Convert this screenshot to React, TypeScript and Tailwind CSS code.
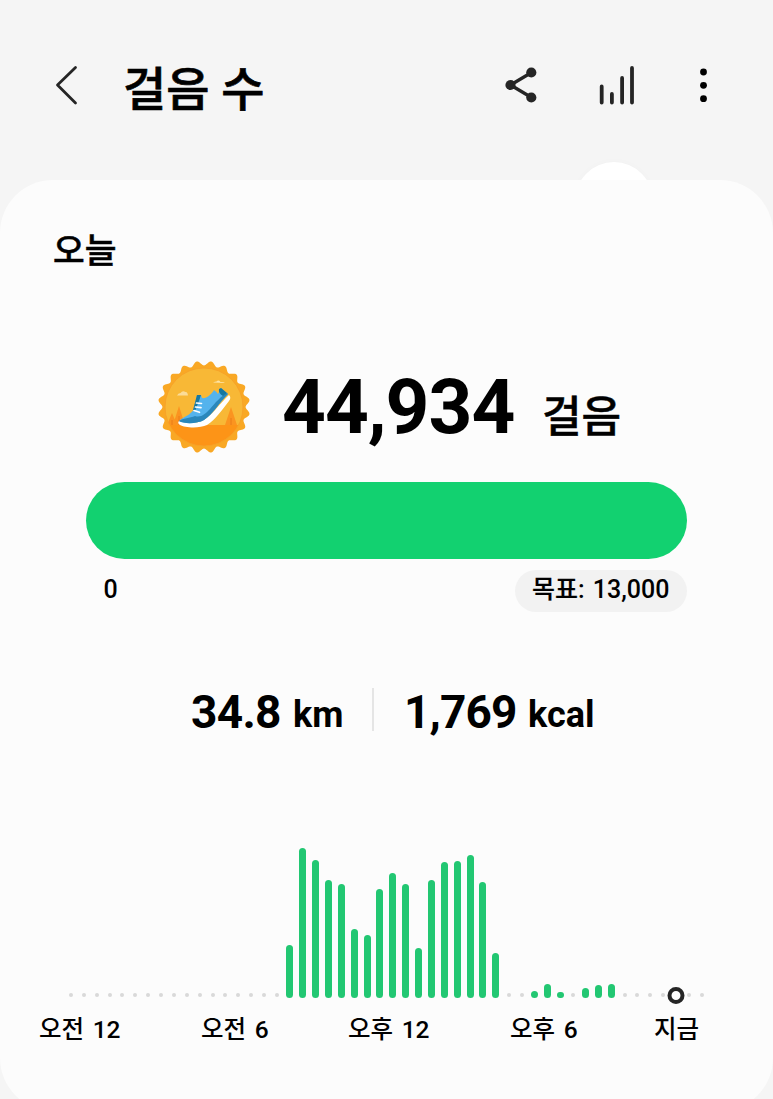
import React from 'react';

// Half-hour slots, bar height in px (0 = no steps recorded)
const SLOTS: number[] = [
  0, 0, 0, 0, 0, 0, 0, 0, 0, 0, 0, 0, 0, 0, 0, 0, 0,
  53.5, 150, 138, 118, 114, 69, 63, 109, 125, 114.5, 50.5, 118, 136.5, 137.5, 143.5, 116.5, 45,
  0, 0, 7.5, 14, 6.5, 0, 10, 13.5, 14,
  0, 0, 0, 0, 0, 0, 0,
];

const NOW_SLOT = 47;

// Scalloped outline of the badge
function scallop(cx: number, cy: number, radius: number, depth: number, count: number) {
  const points: string[] = [];
  for (let i = 0; i < 360; i++) {
    const a = (i / 360) * Math.PI * 2 - Math.PI / 2;
    const r = radius - depth * Math.cos((i / 360) * Math.PI * 2 * count);
    points.push(`${(cx + r * Math.cos(a)).toFixed(2)},${(cy + r * Math.sin(a)).toFixed(2)}`);
  }
  return `M${points.join('L')}Z`;
}

function StepBadge() {
  return (
    <svg className="h-[94px] w-[94px] shrink-0" viewBox="0 0 94 94">
      <defs>
        <clipPath id="badge-face">
          <circle cx="47" cy="47" r="39" />
        </clipPath>
      </defs>
      <path d={scallop(47, 47, 43.8, 2.2, 20)} fill="#f9a825" />
      <g clipPath="url(#badge-face)">
        <rect x="8" y="8" width="78" height="78" fill="#f8b836" />
        <rect x="8" y="65" width="78" height="24" fill="#fd9417" />
        <path d="M22 46l6 19h-12z M15 53l5 12h-10z M74 47l6 18h-12z" fill="#fb9420" />
        <path d="M22 56v9 M15 60v5 M74 58v7" stroke="#e8791a" strokeWidth="0.9" />
      </g>
      <circle cx="47" cy="47" r="39" fill="none" stroke="#f5a02a" strokeWidth="0.8" />
      <path d="M20 35.500q1-2.500 3.500-2.500q2-3 5-1q2-.5 2.500 3.500z" fill="#fbdc98" />
      <path d="M56 22.500q2-1 3.500-1q2-2 4 .5q3-.3 4.500 1z" fill="#fde3a5" />
      <path d="M22 61C27 63 38 64 45 61C55 56 62 44 72 35C74 37 73.500 39 72 41C64 51 59 59 50 65C43 68.500 28 68 23 65Q20 63 22 61Z" fill="#ffffff" />
      <path d="M22 61C26 57 34 55 37 49L40 35L44 35L45 38C49 39 54 35 57 30Q60 32 61 34L64 28L71 34C62 43 56 54 47 60C40 64 27 64 22 61Z" fill="#54b3ed" />
      <path d="M22 61C26 58 33 58 38 56C44 58 48 54 53 49C58 43 64 36 70 33L71 34C62 43 56 54 47 60C40 64 27 64 22 61Z" fill="#2a87bb" />
      <path d="M36 50L40 35L44 35L42 41L38 51Z M62 29L64 28L70 33L66 36Q61 33 62 29Z" fill="#17779f" />
      <path d="M39.500 43l5 .5 M38.500 47l5.500 .6 M37 50.500l5.500 1.800" stroke="#ffffff" strokeWidth="1.700" strokeLinecap="round" />
    </svg>
  );
}

function Header() {
  return (
    <header className="relative flex h-[180px] items-start overflow-hidden pl-[54px] pt-[60px]">
      <svg className="h-[50px] w-[26px]" viewBox="0 0 26 50" fill="none" stroke="#252525" strokeWidth="2.8" strokeLinecap="round" strokeLinejoin="round">
        <path d="M21.500 7.500L3.500 25L21.500 43" />
      </svg>
      <h1 className="ml-[43px] w-[377px] pt-[4px] text-[47px] font-medium leading-[52px] [-webkit-text-stroke:0.7px_black]">걸음 수</h1>
      <svg className="h-[50px] w-[40px]" viewBox="0 0 40 50" fill="#252525">
        <path d="M31.500 12.500L10.500 25L31.500 37.500" fill="none" stroke="#252525" strokeWidth="3.300" />
        <circle cx="10.500" cy="25" r="5.100" />
        <circle cx="31.300" cy="12.500" r="5.100" />
        <circle cx="31.300" cy="37.500" r="5.100" />
      </svg>
      <svg className="ml-[56px] h-[50px] w-[44px]" viewBox="0 0 44 50" fill="none" stroke="#252525" strokeWidth="3.800" strokeLinecap="round">
        <path d="M5.700 26.500V42.500M15.900 34V42.500M26.100 18V42.500M36 8V42.500" />
      </svg>
      <svg className="ml-[56px] h-[50px] w-[14px]" viewBox="0 0 14 50">
        <circle cx="7.500" cy="12" r="3.400" />
        <circle cx="7.500" cy="25.300" r="3.400" />
        <circle cx="7.500" cy="38.700" r="3.400" />
      </svg>
      <div className="absolute left-[575px] top-[162px] size-[78px] rounded-full bg-white shadow-[0_0_8px_rgba(0,0,0,0.02)]" />
    </header>
  );
}

function StepChart() {
  return (
    <div className="ml-[64.500px] mt-[108px] flex h-[162px] w-[644px] items-end">
      {SLOTS.map((height, i) => (
        <div key={i} className="relative flex h-full flex-1 items-end justify-center">
          {height > 0 ? (
            <div className="mb-[4px] w-[7px] rounded-full bg-[#22c772]" style={{ height }} />
          ) : (
            i !== NOW_SLOT && <div className="mb-[5px] size-[4px] rounded-full bg-[#d9d9d9]" />
          )}
          {i === NOW_SLOT && (
            <div className="absolute -bottom-[2px] left-1/2 size-[17px] -translate-x-1/2 rounded-full border-4 border-[#252525] bg-white" />
          )}
        </div>
      ))}
    </div>
  );
}

export default function App() {
  return (
    <div className="h-[1099px] w-[773px] overflow-hidden bg-[#f5f5f5] font-['Roboto','Noto_Sans_CJK_KR',sans-serif] text-black">
      <Header />
      <main className="h-[931px] rounded-[53px] bg-[#fcfcfc]">
        <h2 className="pl-[53px] pt-[49px] text-[34.500px] font-medium leading-[44px] [-webkit-text-stroke:0.5px_black]">오늘</h2>

        <div className="ml-[157px] mt-[87px] flex h-[94px] items-center">
          <StepBadge />
          <span className="ml-[31px] w-[260px] whitespace-nowrap text-[76.500px] font-bold leading-[94px] tracking-[-1px]">44,934</span>
          <span className="pt-[20px] text-[43px] font-medium leading-[50px] [-webkit-text-stroke:0.5px_black]">걸음</span>
        </div>

        <div className="ml-[86px] mt-[28px] h-[77px] w-[601px] rounded-full bg-[#12d170]" />
        <div className="ml-[86px] mt-[11px] flex h-[42px] w-[601px] justify-between text-[25px] font-medium leading-[40px]">
          <span className="pl-[17.500px]">0</span>
          <span className="w-[172px] whitespace-nowrap rounded-full bg-[#f2f2f2] pl-[17px] [word-spacing:2px]">
            <span className="[-webkit-text-stroke:0.2px_black]">목표</span>: 13,000
          </span>
        </div>

        <div className="mt-[76px] flex h-[44px] items-start whitespace-nowrap pl-[191px] font-bold leading-[48px]">
          <span className="w-[102px] text-[46px] tracking-[-0.7px]">34.8</span>
          <span className="w-[79px] pt-[3px] text-[36px]">km</span>
          <div className="h-[43px] w-[2px] bg-[#e5e5e5]" />
          <span className="ml-[30px] w-[124px] text-[46px] tracking-[-0.9px]">1,769</span>
          <span className="pt-[3px] text-[36px]">kcal</span>
        </div>

        <StepChart />

        <div className="mt-[8px] flex whitespace-nowrap pl-[39px] text-[24.500px] font-medium leading-[40px] [word-spacing:2.5px]">
          <span className="w-[162px]">오전 12</span>
          <span className="w-[147px]">오전 6</span>
          <span className="w-[162px]">오후 12</span>
          <span className="w-[144px]">오후 6</span>
          <span>지금</span>
        </div>
      </main>
    </div>
  );
}
